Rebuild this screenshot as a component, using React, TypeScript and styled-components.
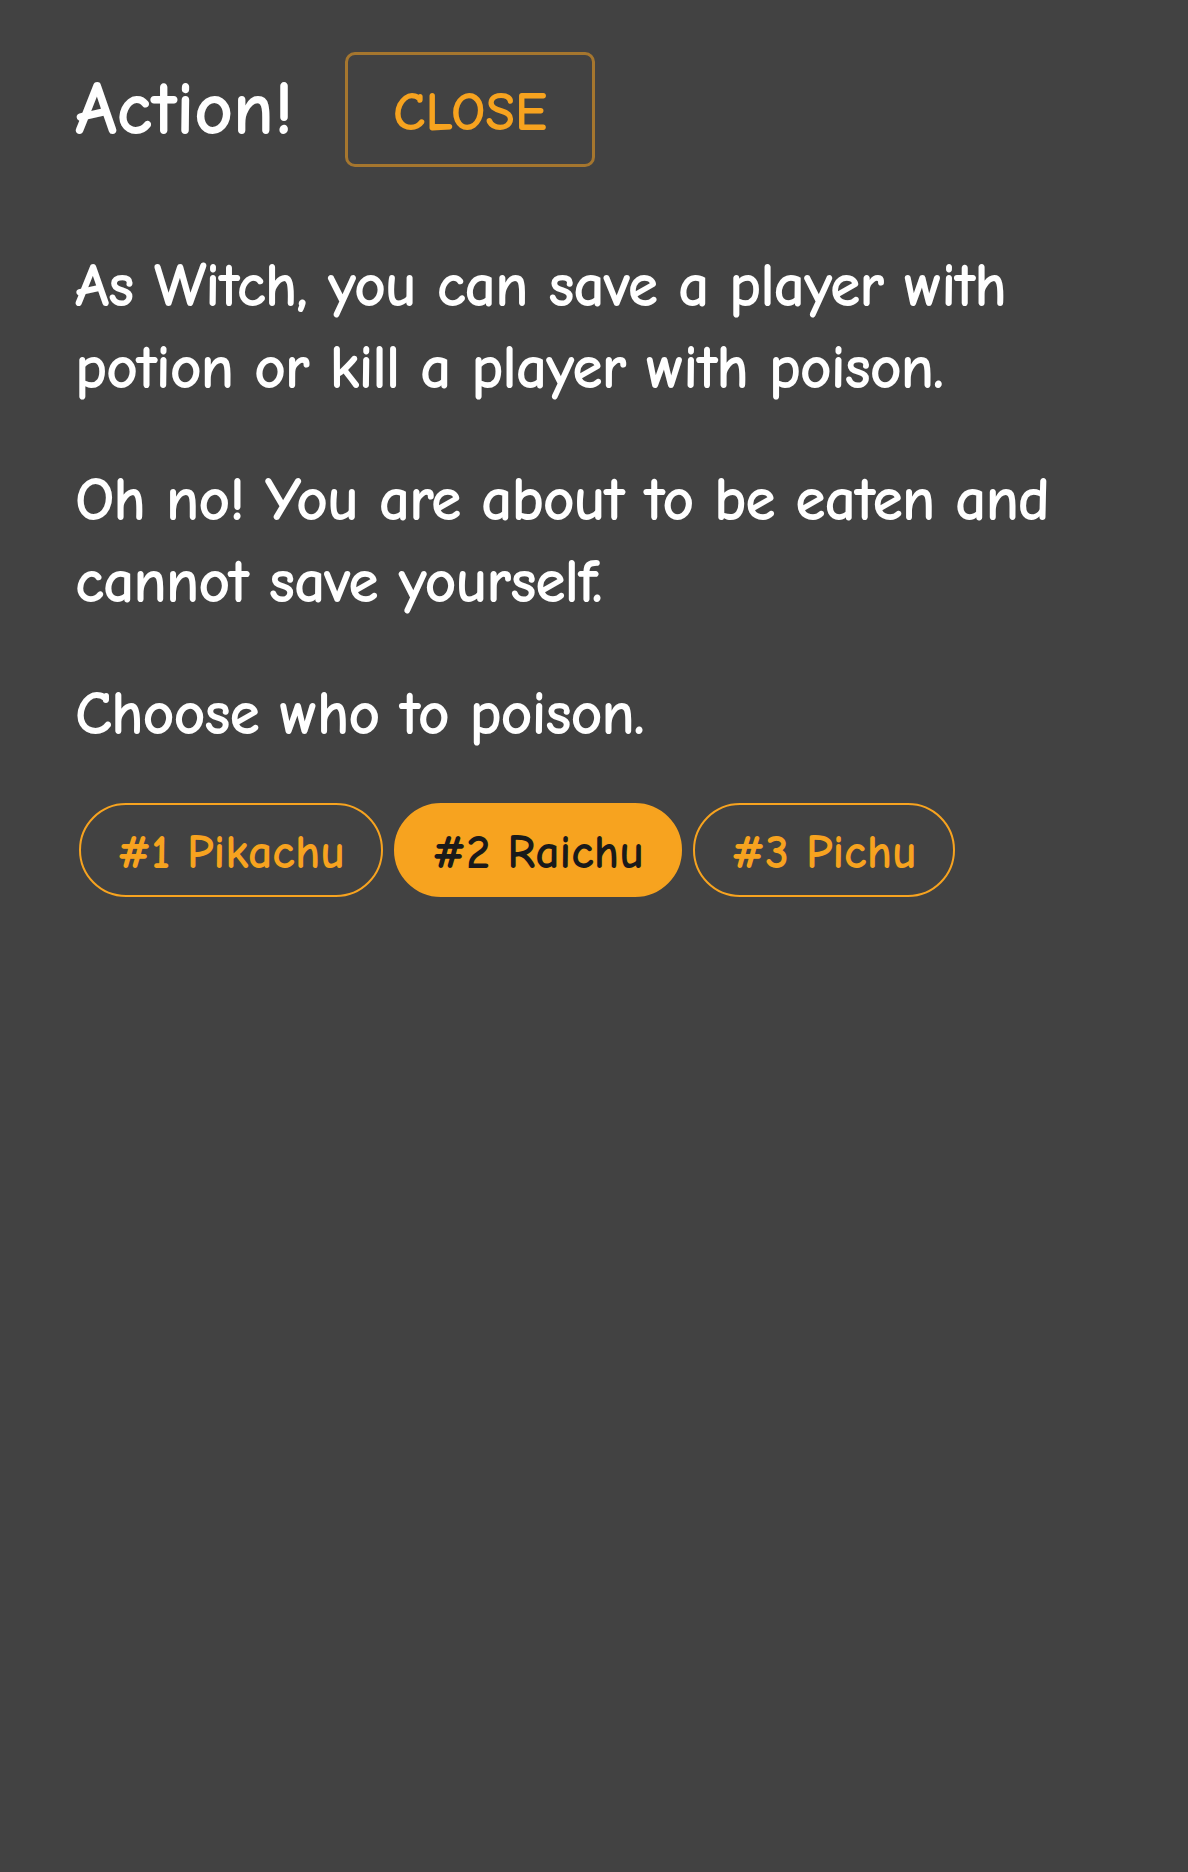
import React, { useState } from "react";
import styled, { createGlobalStyle } from "styled-components";

const GlobalStyle = createGlobalStyle`
  html, body {
    margin: 0;
    padding: 0;
    background: #424242;
  }
  body {
    font-family: "Comic Sans MS", "Comic Neue", "Liberation Sans", sans-serif;
    color: #ffffff;
  }
`;

const Page = styled.div`
  min-height: 1872px;
  box-sizing: border-box;
  background: #424242;
  padding: 52px 76px 0 75px;
`;

const Header = styled.div`
  display: flex;
  align-items: center;
  gap: 52px;
`;

const Title = styled.h1`
  margin: 0;
  font-size: 76px;
  font-weight: 700;
  line-height: 1;
  color: #ffffff;
  letter-spacing: -0.5px;
`;

const CloseButton = styled.button`
  box-sizing: border-box;
  width: 250px;
  height: 115px;
  background: transparent;
  border: 3px solid rgba(247, 163, 31, 0.55);
  border-radius: 10px;
  color: #f7a31f;
  font-family: inherit;
  font-weight: 700;
  font-size: 54px;
  cursor: pointer;
  padding: 6px 0 0;
`;

const Body = styled.div`
  margin-top: 78px;
  display: flex;
  flex-direction: column;
  gap: 50px;
`;

const Paragraph = styled.p`
  margin: 0;
  font-size: 62px;
  font-weight: 700;
  line-height: 82px;
  letter-spacing: -1.2px;
  color: #ffffff;
`;

const Choices = styled.div`
  display: flex;
  flex-wrap: wrap;
  gap: 11px;
  margin-top: 48px;
  padding-left: 4px;
`;

const Choice = styled.button<{ $selected: boolean }>`
  box-sizing: border-box;
  height: 94px;
  padding: 4px 36px 0;
  border-radius: 47px;
  border: 2px solid #f7a31f;
  background: ${(p) => (p.$selected ? "#f7a31f" : "transparent")};
  color: ${(p) => (p.$selected ? "#1a1a1a" : "#f7a31f")};
  font-family: inherit;
  font-weight: 700;
  font-size: 48px;
  cursor: pointer;
`;

const players = ["#1 Pikachu", "#2 Raichu", "#3 Pichu"];

export default function App() {
  const [selected, setSelected] = useState(1);
  return (
    <>
      <GlobalStyle />
      <Page>
        <Header>
          <Title>Action!</Title>
          <CloseButton>CLOSE</CloseButton>
        </Header>
        <Body>
          <Paragraph>
            As Witch, you can save a player with potion or kill a player with poison.
          </Paragraph>
          <Paragraph>
            Oh no! You are about to be eaten and cannot save yourself.
          </Paragraph>
          <Paragraph>Choose who to poison.</Paragraph>
        </Body>
        <Choices>
          {players.map((name, i) => (
            <Choice key={name} $selected={i === selected} onClick={() => setSelected(i)}>
              {name}
            </Choice>
          ))}
        </Choices>
      </Page>
    </>
  );
}
